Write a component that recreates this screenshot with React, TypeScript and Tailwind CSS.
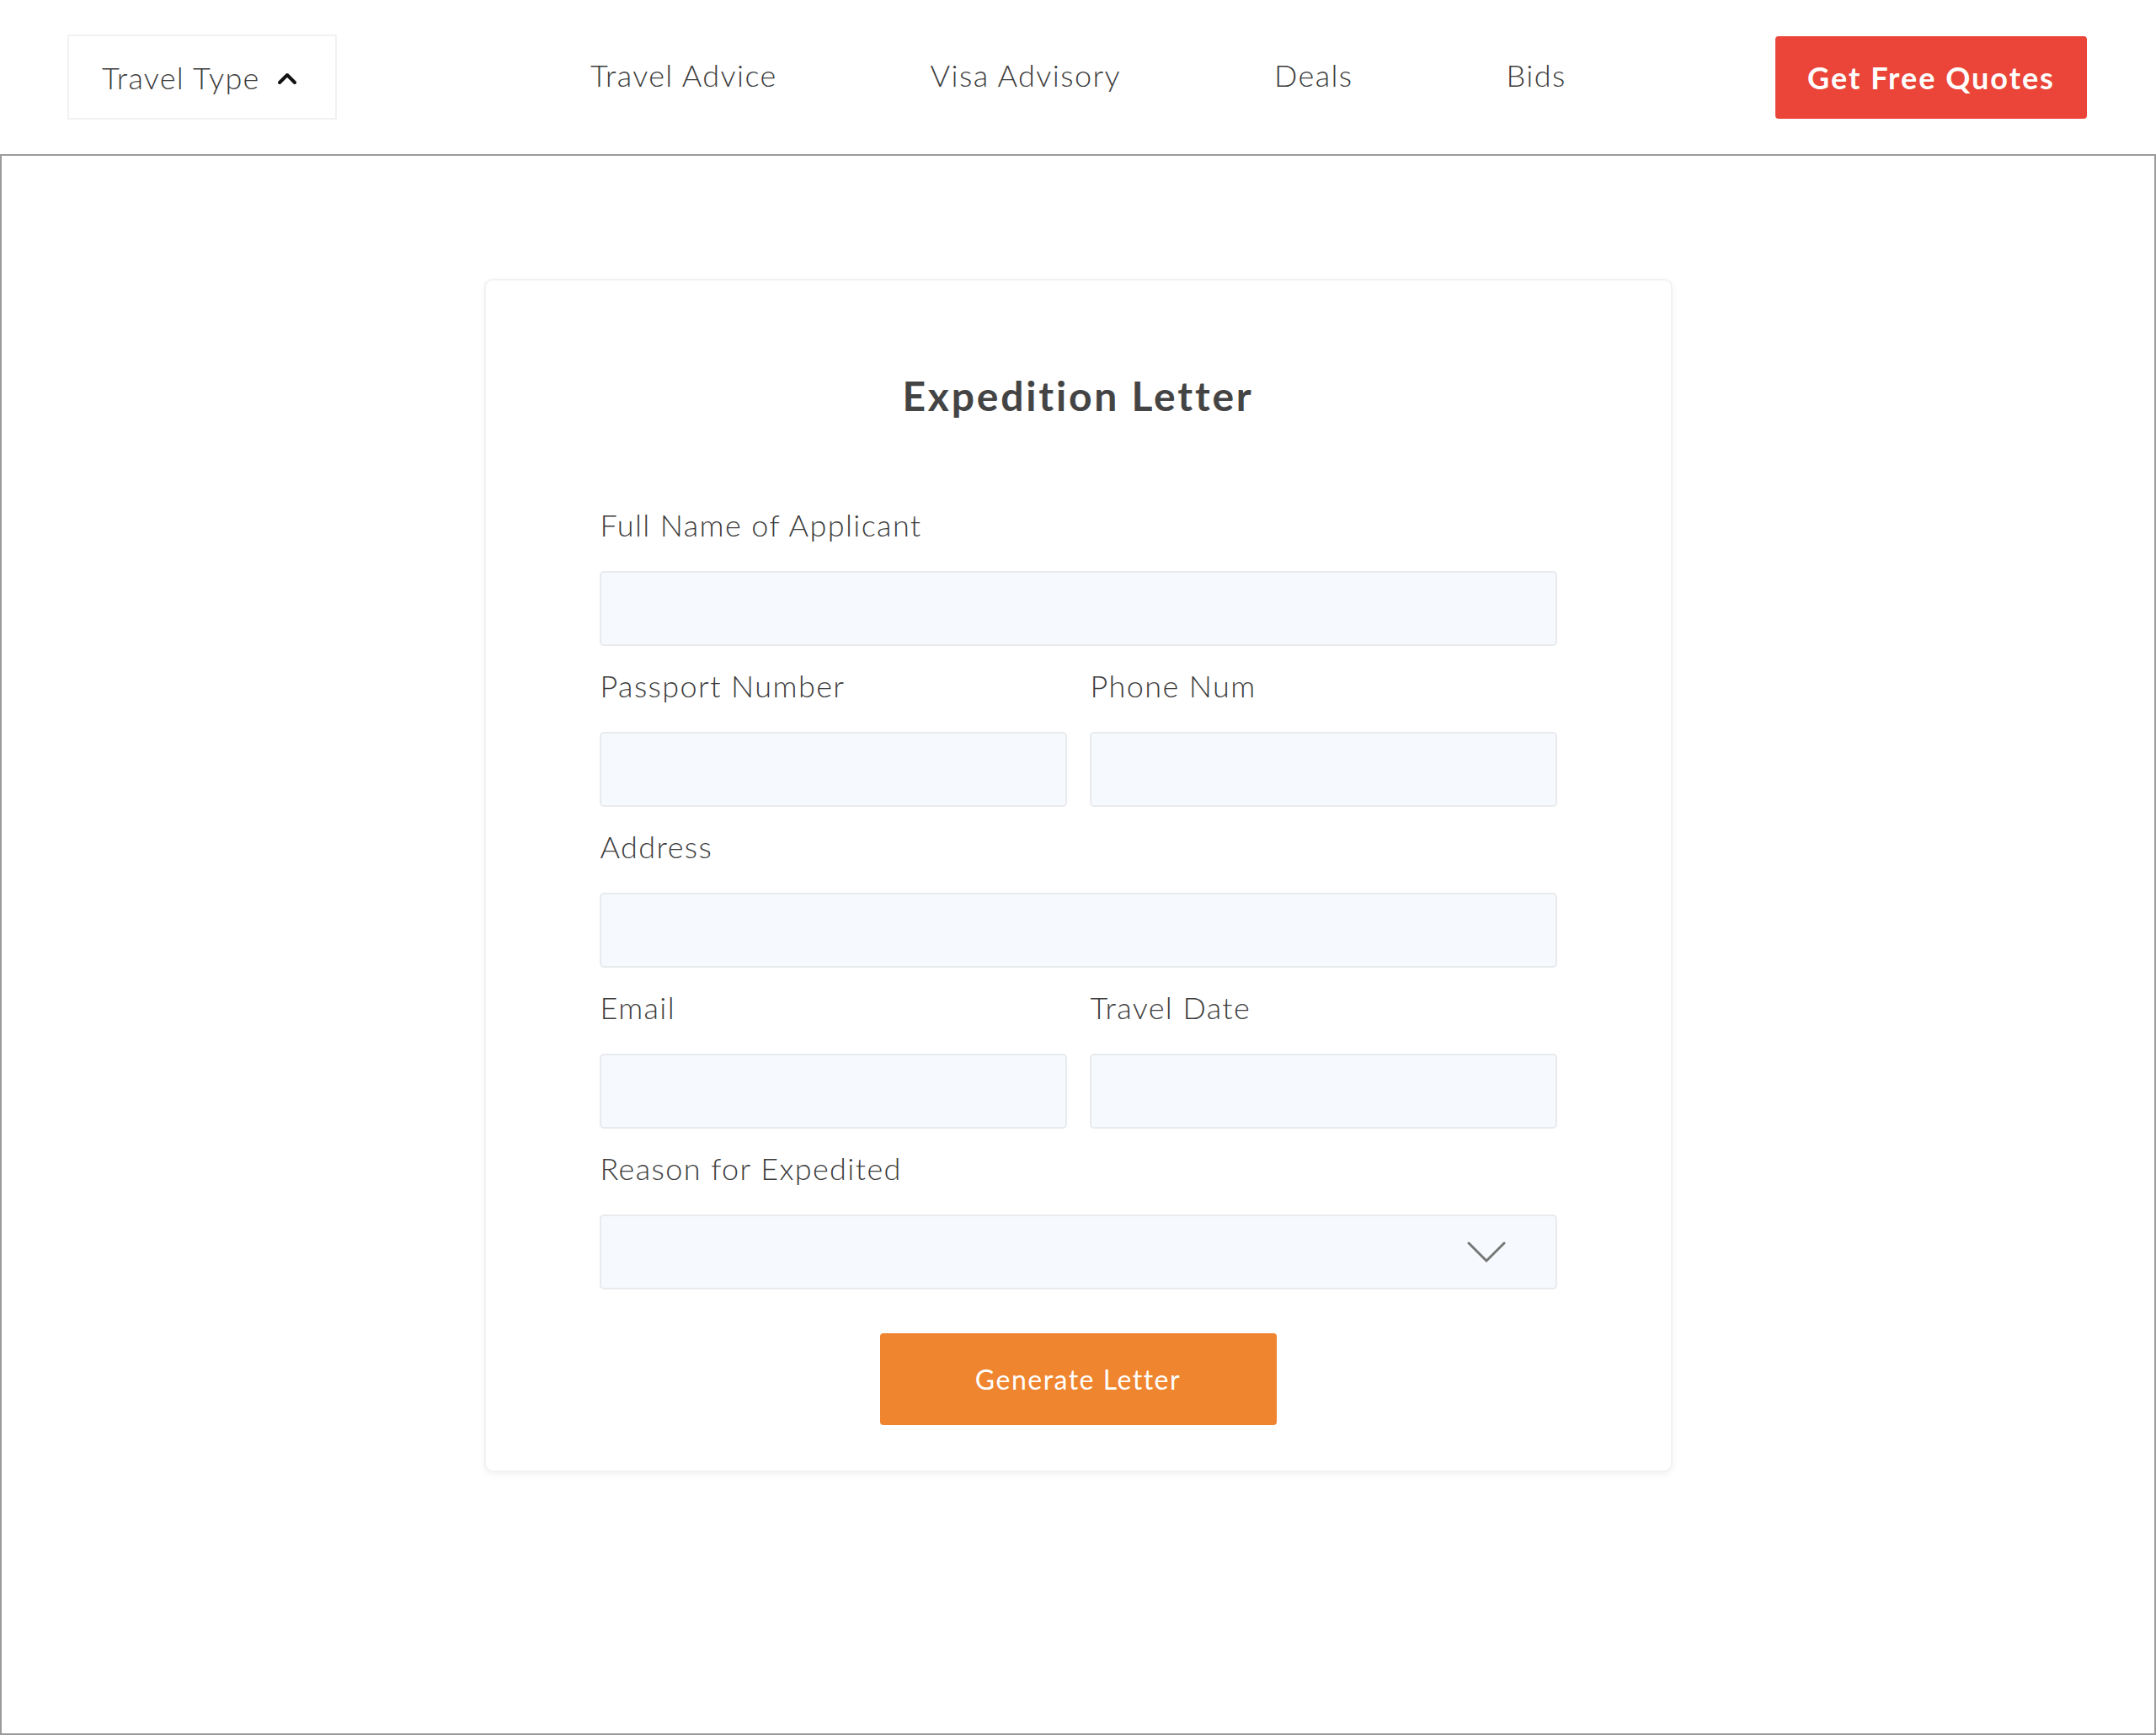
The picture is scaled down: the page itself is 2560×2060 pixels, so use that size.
import React from "react";

const font = { fontFamily: "Lato, 'Noto Sans', 'Liberation Sans', sans-serif" };

function Field({ label }: { label: string }) {
  return (
    <div className="flex flex-col">
      <label className="text-[36px] leading-[36px] text-[#3c3c3c] tracking-[1.4px] font-light mb-[37px] pl-[1px]">{label}</label>
      <div className="h-[89px] rounded-[5px] border-2 border-[#e8eaed] bg-[#f6f9fd]" />
    </div>
  );
}

export default function App() {
  return (
    <div className="w-[2560px] h-[2060px] bg-white flex flex-col" style={font}>
      <header className="h-[183px] flex items-center pl-[80px] pr-[82px] shrink-0">
        <div className="w-[320px] h-[101px] border-2 border-[#f1f1f1] flex items-center pl-[39px] gap-[20px] text-[36px] tracking-[1.3px] font-light text-[#3c3c3c]">
          <span>Travel Type</span>
          <svg width="24" height="16" viewBox="0 0 24 16" className="mt-[2px]">
            <polyline points="3,13 12,4 21,13" fill="none" stroke="#111" strokeWidth="4" strokeLinecap="round" strokeLinejoin="round" />
          </svg>
        </div>
        <nav className="flex items-center gap-[182px] ml-[301px] mb-[6px] text-[36px] tracking-[1.4px] font-light text-[#3c3c3c]">
          <span>Travel Advice</span>
          <span>Visa Advisory</span>
          <span>Deals</span>
          <span>Bids</span>
        </nav>
        <button className="ml-auto w-[370px] h-[98px] rounded-[4px] bg-[#ea4538] text-white text-[36px] font-bold tracking-[2px]">
          Get Free Quotes
        </button>
      </header>
      <main className="flex-1 border-2 border-[#9b9b9b] flex justify-center pt-[146px]">
        <div className="w-[1411px] h-[1417px] rounded-[10px] border-2 border-[#f2f2f2] shadow-[0_3px_8px_rgba(0,0,0,0.05)] bg-white pt-[113px] px-[135px] flex flex-col">
          <h1 className="text-center text-[48px] leading-[48px] font-bold text-[#444444] tracking-[2.8px] mb-[111px]">Expedition Letter</h1>
          <div className="flex flex-col gap-[29px]">
            <Field label="Full Name of Applicant" />
            <div className="grid grid-cols-2 gap-[27px]">
              <Field label="Passport Number" />
              <Field label="Phone Num" />
            </div>
            <Field label="Address" />
            <div className="grid grid-cols-2 gap-[27px]">
              <Field label="Email" />
              <Field label="Travel Date" />
            </div>
            <div className="flex flex-col">
              <label className="text-[36px] leading-[36px] text-[#3c3c3c] tracking-[1.4px] font-light mb-[37px] pl-[1px]">Reason for Expedited</label>
              <div className="h-[89px] rounded-[5px] border-2 border-[#e8eaed] bg-[#f6f9fd] flex items-center justify-end pr-[59px]">
                <svg width="46" height="26" viewBox="0 0 46 26">
                  <polyline points="2,2 23,23 44,2" fill="none" stroke="#777" strokeWidth="3" strokeLinecap="round" strokeLinejoin="round" />
                </svg>
              </div>
            </div>
          </div>
          <div className="flex justify-center mt-[52px]">
            <button className="w-[471px] h-[109px] rounded-[4px] bg-[#ef852e] text-white text-[32px] tracking-[1.5px]">
              Generate Letter
            </button>
          </div>
        </div>
      </main>
    </div>
  );
}
